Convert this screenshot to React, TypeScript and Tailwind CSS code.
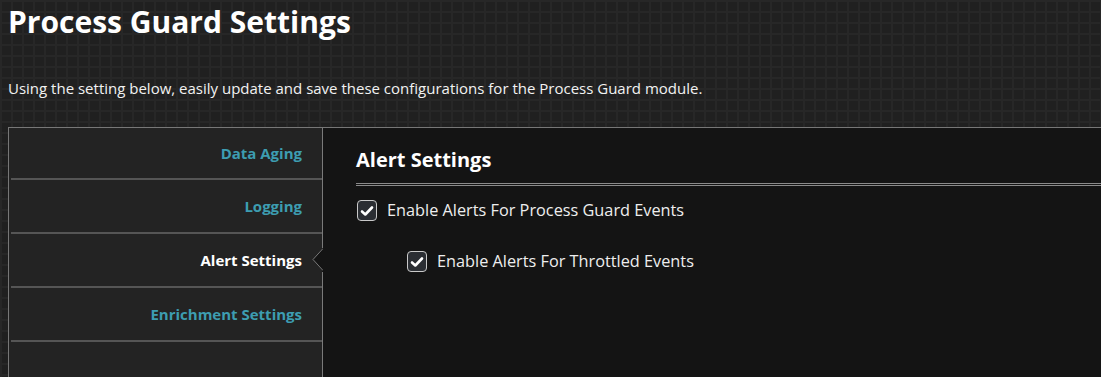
import React from "react";

const items = [
  { label: "Data Aging", active: false, h: "h-[52px]" },
  { label: "Logging", active: false, h: "h-[54px]" },
  { label: "Alert Settings", active: true, h: "h-[54px]" },
  { label: "Enrichment Settings", active: false, h: "h-[54px]" },
];

function Check({ label }: { label: string }) {
  return (
    <div className="flex items-center gap-[10px]">
      <div className="w-[20px] h-[21px] rounded-[4px] border-[1.5px] border-[#c9c9c9] bg-[#2b2e33] flex items-center justify-center">
        <svg width="14" height="12" viewBox="0 0 14 12">
          <path d="M2 6.5 L5.3 9.5 L12 2.5" fill="none" stroke="#ffffff" strokeWidth="2.6" strokeLinecap="round" strokeLinejoin="round" />
        </svg>
      </div>
      <span className="text-[16.3px] text-[#eeeeee] leading-none">{label}</span>
    </div>
  );
}

export default function App() {
  return (
    <div
      className="w-full h-[377px] overflow-hidden bg-[#202020] bg-[linear-gradient(#272727_2px,transparent_2px),linear-gradient(90deg,#272727_2px,transparent_2px)] bg-size-[11px_11px]"
      style={{ fontFamily: '"Open Sans", sans-serif' }}
    >
      <div className="pl-[8px] pt-[2px]">
        <h1 className="text-[30px] font-bold text-white leading-[40px]">Process Guard Settings</h1>
        <p className="mt-[36px] text-[15px] text-[#f2f2f2] leading-[20px]">
          Using the setting below, easily update and save these configurations for the Process Guard module.
        </p>
      </div>
      <div className="ml-[8px] mt-[29px] flex border-t border-l border-[#777777] h-[260px]">
        <div className="relative w-[314px] bg-[#232323] border-r border-[#7a7a7a] pl-[2px]">
          {items.map((it) => (
            <div
              key={it.label}
              className={`relative ${it.h} border-b-2 border-[#555555] flex items-center justify-end pr-[20px]`}
            >
              <span
                className={`text-[15px] font-bold ${it.active ? "text-white" : "text-[#3d9db1]"}`}
              >
                {it.label}
              </span>
              {it.active && (
                <svg
                  className="absolute right-[-1px] top-[14px]"
                  width="11"
                  height="24"
                  viewBox="0 0 11 24"
                >
                  <polygon points="10.5,0 1,11.5 10.5,23" fill="#141414" />
                  <rect x="10" y="0" width="1" height="24" fill="#141414" />
                  <polyline points="11,0.5 1,11.5 11,22.5" fill="none" stroke="#7a7a7a" strokeWidth="1" />
                </svg>
              )}
            </div>
          ))}
        </div>
        <div className="flex-1 bg-[#141414] pl-[33px] pt-[19px]">
          <h2 className="text-[20px] font-bold text-white leading-[26px]">Alert Settings</h2>
          <div className="mt-[10px] h-[3px] border-y border-[#8a8a8a]" />
          <div className="mt-[14px] pl-[1px]">
            <Check label="Enable Alerts For Process Guard Events" />
          </div>
          <div className="mt-[30px] pl-[51px]">
            <Check label="Enable Alerts For Throttled Events" />
          </div>
        </div>
      </div>
    </div>
  );
}
